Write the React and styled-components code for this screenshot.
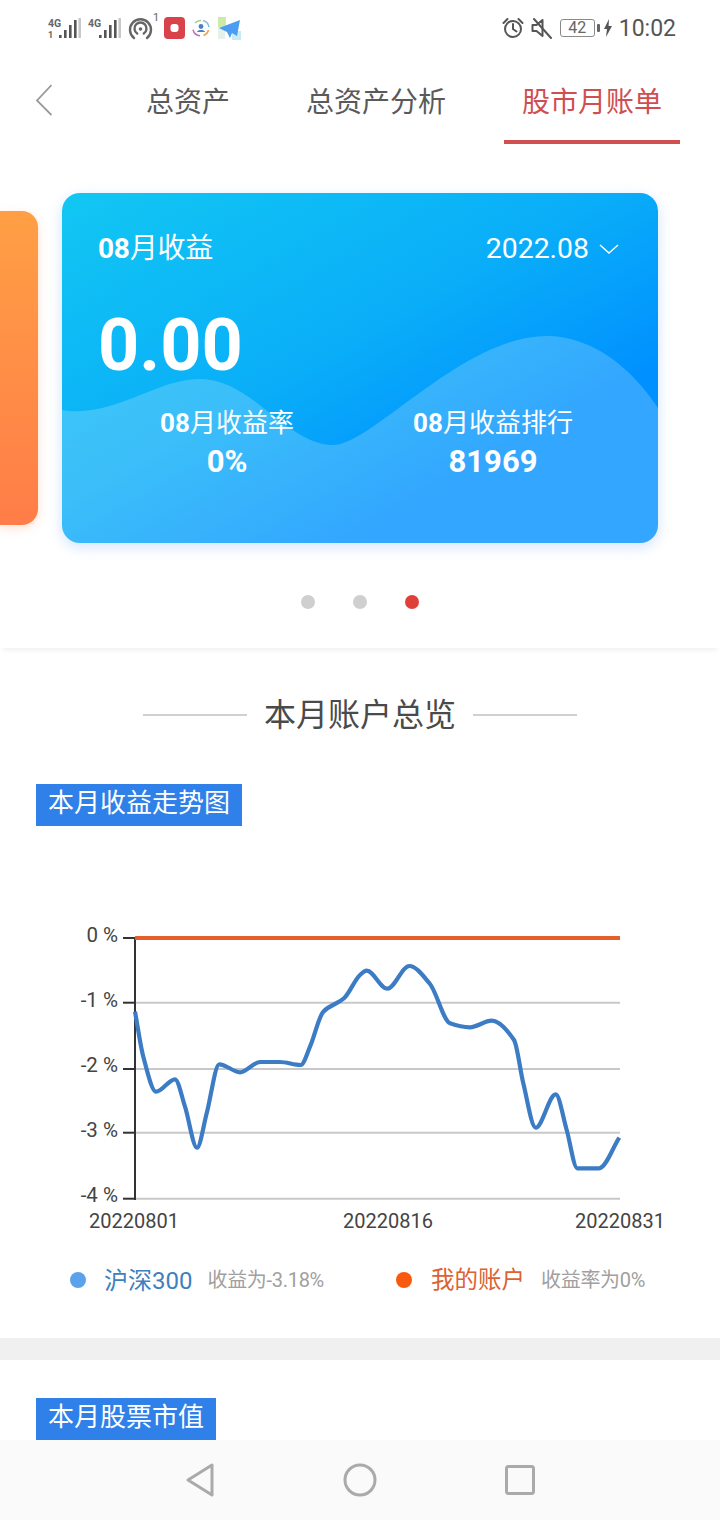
import React from "react";
import styled, { createGlobalStyle } from "styled-components";

const FONT = `Roboto, "Noto Sans CJK SC", sans-serif`;

const Global = createGlobalStyle`
  html, body { margin: 0; padding: 0; background: #fff; }
  * { box-sizing: border-box; }
  body { font-family: ${FONT}; }
`;

const Page = styled.div`
  width: 720px;
  height: 1520px;
  overflow: hidden;
  background: #fff;
  display: flex;
  flex-direction: column;
`;

const StatusBar = styled.div`
  height: 56px;
  padding: 0 44px 0 48px;
  display: flex;
  align-items: center;
  justify-content: space-between;
`;
const StatusGroup = styled.div`
  display: flex;
  align-items: center;
  gap: ${(p) => p.$gap || 7}px;
`;
const Clock = styled.span`
  font-size: 23px;
  color: #555;
  line-height: 1;
`;
const Battery = styled.div`
  width: 35px;
  height: 18px;
  border: 1.5px solid #8a8a8a;
  border-radius: 3px;
  font-size: 16px;
  line-height: 15px;
  text-align: center;
  color: #666;
`;
const BatteryTip = styled.div`
  width: 3px;
  height: 8px;
  background: #666;
  border-radius: 1px;
  margin: 0 -3px 0 -5px;
`;

const Nav = styled.nav`
  height: 88px;
  display: flex;
  align-items: stretch;
  padding-left: 36px;
`;
const BackButton = styled.div`
  width: 16px;
  display: flex;
  align-items: center;
  margin-right: 76px;
`;
const Tabs = styled.div`
  display: flex;
  gap: 40px;
`;
const Tab = styled.div`
  padding: 4px 18px 0;
  height: 88px;
  display: flex;
  align-items: center;
  font-size: 28px;
  color: ${(p) => (p.$active ? "#cf4f50" : "#5a5a5a")};
  border-bottom: 4px solid ${(p) => (p.$active ? "#d05050" : "transparent")};
`;

const Carousel = styled.section`
  height: 504px;
  padding-top: 49px;
  background: #fff;
  box-shadow: 0 5px 5px -3px rgba(0, 0, 0, 0.07);
  position: relative;
  z-index: 1;
  display: flex;
  flex-direction: column;
`;
const Slides = styled.div`
  display: flex;
  align-items: center;
  gap: 24px;
`;
const PeekCard = styled.div`
  width: 38px;
  height: 314px;
  border-radius: 0 16px 16px 0;
  background: linear-gradient(180deg, #ff9f45 0%, #ff7d48 100%);
  box-shadow: 0 3px 10px rgba(255, 130, 60, 0.25);
`;
const Card = styled.div`
  position: relative;
  width: 596px;
  height: 350px;
  border-radius: 18px;
  overflow: hidden;
  color: #fff;
  background: linear-gradient(150deg, #12c7f3 0%, #0aaef8 45%, #0090ff 75%);
`;
const CardShell = styled.div`
  border-radius: 18px;
  box-shadow: 0 4px 14px rgba(50, 130, 240, 0.22);
`;
const Wave = styled.svg`
  position: absolute;
  left: 0;
  top: 0;
`;
const CardBody = styled.div`
  position: relative;
  height: 100%;
  display: flex;
  flex-direction: column;
`;
const CardHeader = styled.div`
  display: flex;
  align-items: center;
  justify-content: space-between;
  height: 40px;
  margin-top: 36px;
  padding: 0 39px 0 36px;
`;
const MonthTitle = styled.div`
  font-size: 28px;
  line-height: 40px;
  letter-spacing: -0.2px;
`;
const Strong = styled.b`
  font-weight: 700;
`;
const DatePicker = styled.div`
  display: flex;
  align-items: center;
  gap: 10px;
  font-size: 28.4px;
  line-height: 40px;
`;
const BigValue = styled.div`
  font-size: 72px;
  font-weight: 700;
  line-height: 84px;
  margin-top: 35px;
  padding-left: 36px;
`;
const Stats = styled.div`
  display: grid;
  grid-template-columns: 266px 266px;
  padding: 0 32px;
  margin-top: 16px;
`;
const Stat = styled.div`
  display: flex;
  flex-direction: column;
  align-items: center;
`;
const StatLabel = styled.div`
  font-size: 26px;
  line-height: 38px;
`;
const StatValue = styled.div`
  font-size: 31px;
  font-weight: 700;
  line-height: 40px;
`;
const Dots = styled.div`
  display: flex;
  justify-content: center;
  gap: 38px;
  margin-top: 52px;
`;
const Dot = styled.span`
  width: 14px;
  height: 14px;
  border-radius: 50%;
  background: ${(p) => (p.$active ? "#e0403a" : "#cfcfcf")};
`;

const Overview = styled.section`
  height: 690px;
  display: flex;
  flex-direction: column;
`;
const Heading = styled.div`
  display: flex;
  align-items: center;
  justify-content: center;
  gap: 17px;
  height: 40px;
  margin-top: 47px;
  font-size: 32px;
  color: #4a4a4a;
`;
const HeadingTitle = styled.span`
  line-height: 40px;
`;
const HeadingRule = styled.span`
  width: 104px;
  height: 2px;
  background: #d0d0d0;
`;
const Tag = styled.div`
  align-self: flex-start;
  height: 42px;
  margin: ${(p) => p.$top}px 0 0 36px;
  padding: 0 12px;
  background: #2f80e8;
  color: #fff;
  font-size: 26px;
  line-height: 38px;
`;
const Chart = styled.svg`
  display: block;
  margin-top: 84px;
  flex: none;
`;
const Legend = styled.div`
  height: 80px;
  display: flex;
  align-items: center;
  padding-left: 70px;
`;
const LegendItem = styled.div`
  display: flex;
  align-items: center;
  width: ${(p) => p.$width}px;
`;
const LegendDot = styled.span`
  width: 16px;
  height: 16px;
  border-radius: 50%;
  background: ${(p) => p.$color};
  margin-right: ${(p) => p.$gap}px;
`;
const LegendName = styled.span`
  font-size: ${(p) => p.$size}px;
  color: ${(p) => p.$color};
  margin: 0 ${(p) => p.$gap}px 4px 0;
`;
const LegendNote = styled.span`
  font-size: 20px;
  color: #a0a0a0;
  letter-spacing: -0.3px;
  margin-bottom: 3px;
`;
const Band = styled.div`
  height: 22px;
  background: #f0f0f0;
  flex: none;
`;
const Holdings = styled.section`
  height: 80px;
  display: flex;
  flex-direction: column;
`;
const SystemBar = styled.div`
  height: 80px;
  background: #fafafa;
  flex: none;
  display: flex;
  align-items: center;
  justify-content: center;
  gap: 128px;
`;
const HotspotSvg = styled.svg`
  overflow: visible;
`;

const SignalIcon = ({ extra }) => (
  <svg width="33" height="22" viewBox="0 0 33 22">
    <text x="0" y="10" fontFamily="Roboto, sans-serif" fontSize="10.5" fontWeight="700" fill="#666">4G</text>
    {extra && <text x="0" y="21" fontFamily="Roboto, sans-serif" fontSize="9" fontWeight="700" fill="#666">1</text>}
    <rect x="11" y="18" width="2.6" height="3" fill="#555" />
    <rect x="16" y="13" width="2.6" height="8" fill="#555" />
    <rect x="21" y="8" width="2.6" height="13" fill="#555" />
    <rect x="26" y="3" width="2.6" height="18" fill="#555" />
    <rect x="30.4" y="1" width="2.6" height="20" fill="#c8c8c8" />
  </svg>
);

const HotspotIcon = () => (
  <HotspotSvg width="29" height="28" viewBox="0 0 29 28">
    <g fill="none" stroke="#666" strokeWidth="2.4" strokeLinecap="round">
      <path d="M6 24a10.5 10.5 0 1 1 13 0" />
      <path d="M9.2 19.5a6 6 0 1 1 6.6 0" />
    </g>
    <circle cx="12.5" cy="15" r="1.8" fill="#666" />
    <text x="25" y="7" fontFamily="Roboto, sans-serif" fontSize="11" fill="#666">1</text>
  </HotspotSvg>
);

const RecordIcon = () => (
  <svg width="21" height="22" viewBox="0 0 21 22">
    <rect width="21" height="22" rx="4" fill="#d8434b" />
    <rect x="6.5" y="7" width="8" height="8" rx="3" fill="#fff" />
  </svg>
);

const RingIcon = () => (
  <svg width="18" height="18" viewBox="0 0 18 18">
    <g fill="none" strokeWidth="1.5">
      <path d="M3 4a8 8 0 0 1 6-2.6" stroke="#9ccf8e" />
      <path d="M11 1.5a8 8 0 0 1 6 6.5" stroke="#7fc2d8" />
      <path d="M16.5 11a8 8 0 0 1-5 5.5" stroke="#e6a04a" />
      <path d="M8 16.8a8 8 0 0 1-7-6" stroke="#c56bc4" />
    </g>
    <circle cx="9" cy="7.5" r="2.4" fill="#4c7fc4" />
    <path d="M5 13c.6-2.6 7.4-2.6 8 0Z" fill="#4c7fc4" />
  </svg>
);

const PlaneIcon = () => (
  <svg width="23" height="23" viewBox="0 0 23 23">
    <rect x="0" y="0" width="8" height="10" fill="#cdeaa8" />
    <rect x="0" y="10" width="7" height="12" fill="#e6f1ea" />
    <rect x="14" y="14" width="9" height="9" fill="#c8ecf4" />
    <path d="M22 3 1 11l6 3 2 1 3 6 2-5 5 3Z" fill="#4a9df0" />
  </svg>
);

const AlarmIcon = () => (
  <svg width="22" height="22" viewBox="0 0 22 22" fill="none" stroke="#555" strokeWidth="2">
    <circle cx="11" cy="12" r="8" />
    <path d="M11 7v5l3.5 2.5M1.5 6 5.5 2M20.5 6l-4-4" strokeLinecap="round" />
  </svg>
);

const MuteIcon = () => (
  <svg width="22" height="22" viewBox="0 0 22 22" fill="none" stroke="#555" strokeWidth="2">
    <path d="M1.5 8h4l6-5v16l-6-5h-4Z" strokeLinejoin="round" />
    <path d="M3 2l17 19" strokeLinecap="round" />
  </svg>
);

const BoltIcon = () => (
  <svg width="8" height="18" viewBox="0 0 8 18">
    <path d="M5 0 0 10h3l-1 8 6-11H4.600Z" fill="#555" />
  </svg>
);

const points = [
  [135, 1011.7], [143.3, 1056.7], [156, 1091.7], [175, 1079.3], [185, 1106.7], [197, 1147.7],
  [206.7, 1113.3], [219.3, 1064.3], [240, 1072.3], [260, 1062], [280, 1062], [300.7, 1065],
  [310, 1046.7], [323.3, 1011.7], [344, 998.3], [360, 975], [366.7, 970.7], [387.3, 988.7],
  [409.3, 966], [430, 984], [450, 1023.3], [470, 1027.3], [491.700, 1020.7], [514, 1040],
  [523.3, 1083.3], [535.7, 1127.7], [555.7, 1094.3], [566.7, 1130], [577.3, 1168.3],
  [599, 1168.3], [619.3, 1137.7],
].map(([x, y]) => [x, y - 910]);

function monotonePath(pts) {
  const n = pts.length;
  const secant = [];
  for (let i = 0; i < n - 1; i++) {
    secant.push((pts[i + 1][1] - pts[i][1]) / (pts[i + 1][0] - pts[i][0]));
  }
  const slope = pts.map((_, i) => {
    if (i === 0) return secant[0];
    if (i === n - 1) return secant[n - 2];
    const a = secant[i - 1];
    const b = secant[i];
    return a * b <= 0 ? 0 : (2 * a * b) / (a + b);
  });
  let d = `M${pts[0][0]} ${pts[0][1]}`;
  for (let i = 0; i < n - 1; i++) {
    const h = (pts[i + 1][0] - pts[i][0]) / 3;
    const c1x = pts[i][0] + h;
    const c1y = pts[i][1] + slope[i] * h;
    const c2x = pts[i + 1][0] - h;
    const c2y = pts[i + 1][1] - slope[i + 1] * h;
    d += ` C${c1x.toFixed(1)} ${c1y.toFixed(1)} ${c2x.toFixed(1)} ${c2y.toFixed(1)} ${pts[i + 1][0]} ${pts[i + 1][1]}`;
  }
  return d;
}

const yTicks = [
  { label: "0 %", y: 28, text: 32 },
  { label: "-1 %", y: 92.7, text: 97 },
  { label: "-2 %", y: 159, text: 162 },
  { label: "-3 %", y: 222.7, text: 227 },
  { label: "-4 %", y: 288.7, text: 292 },
];

const TrendChart = () => (
  <Chart width="720" height="330" viewBox="0 0 720 330">
    {yTicks.slice(1).map((t) => (
      <line key={t.label} x1="135" x2="620" y1={t.y} y2={t.y} stroke="#c8c8c8" strokeWidth="2" />
    ))}
    {yTicks.map((t) => (
      <g key={t.label}>
        <line x1="123" x2="135" y1={t.y} y2={t.y} stroke="#333" strokeWidth="2" />
        <text x="118" y={t.text} textAnchor="end" fontFamily="Roboto, sans-serif" fontSize="20.5" fill="#444">{t.label}</text>
      </g>
    ))}
    <line x1="135" x2="135" y1="28" y2="290" stroke="#333" strokeWidth="2" />
    <path d={monotonePath(points)} fill="none" stroke="#3b7cc4" strokeWidth="4.2" strokeLinejoin="round" />
    <line x1="135" x2="620" y1="28" y2="28" stroke="#e55f2a" strokeWidth="4" />
    <g fontFamily="Roboto, sans-serif" fontSize="20" fill="#444">
      <text x="89" y="318">20220801</text>
      <text x="343" y="318">20220816</text>
      <text x="575" y="318">20220831</text>
    </g>
  </Chart>
);

export default function App() {
  return (
    <Page>
      <Global />
      <StatusBar>
        <StatusGroup $gap={7}>
          <SignalIcon extra />
          <SignalIcon />
          <HotspotIcon />
          <RecordIcon />
          <StatusGroup $gap={8}>
            <RingIcon />
            <PlaneIcon />
          </StatusGroup>
        </StatusGroup>
        <StatusGroup $gap={7}>
          <AlarmIcon />
          <MuteIcon />
          <Battery>42</Battery>
          <BatteryTip />
          <BoltIcon />
          <Clock>10:02</Clock>
        </StatusGroup>
      </StatusBar>

      <Nav>
        <BackButton>
          <svg width="16" height="32" viewBox="0 0 16 32" fill="none" stroke="#999" strokeWidth="1.8">
            <path d="M15.500 1 1 16.500 15.500 31" />
          </svg>
        </BackButton>
        <Tabs>
          <Tab>总资产</Tab>
          <Tab>总资产分析</Tab>
          <Tab $active>股市月账单</Tab>
        </Tabs>
      </Nav>

      <Carousel>
        <Slides>
          <PeekCard />
          <CardShell>
            <Card>
              <Wave width="596" height="350" viewBox="0 0 596 350">
                <path
                  d="M0 217C10 219 22 219 40 215C75 207 105 186 138 186C190 186 225 252 271 252C310 252 400 143 485 143C530 143 570 175 596 215V350H0Z"
                  fill="rgba(255,255,255,0.2)"
                />
              </Wave>
              <CardBody>
                <CardHeader>
                  <MonthTitle><Strong>08</Strong>月收益</MonthTitle>
                  <DatePicker>
                    2022.08
                    <svg width="20" height="10" viewBox="0 0 20 10" fill="none" stroke="#fff" strokeWidth="1.500">
                      <path d="M1 1l9 8 9-8" />
                    </svg>
                  </DatePicker>
                </CardHeader>
                <BigValue>0.00</BigValue>
                <Stats>
                  <Stat>
                    <StatLabel><Strong>08</Strong>月收益率</StatLabel>
                    <StatValue>0%</StatValue>
                  </Stat>
                  <Stat>
                    <StatLabel><Strong>08</Strong>月收益排行</StatLabel>
                    <StatValue>81969</StatValue>
                  </Stat>
                </Stats>
              </CardBody>
            </Card>
          </CardShell>
        </Slides>
        <Dots>
          <Dot />
          <Dot />
          <Dot $active />
        </Dots>
      </Carousel>

      <Overview>
        <Heading>
          <HeadingRule />
          <HeadingTitle>本月账户总览</HeadingTitle>
          <HeadingRule />
        </Heading>
        <Tag $top={49}>本月收益走势图</Tag>
        <TrendChart />
        <Legend>
          <LegendItem $width={326}>
            <LegendDot $color="#5ba2ec" $gap={18} />
            <LegendName $size={24} $color="#3e80c0" $gap={15}>沪深300</LegendName>
            <LegendNote>收益为-3.18%</LegendNote>
          </LegendItem>
          <LegendItem>
            <LegendDot $color="#f9590f" $gap={19} />
            <LegendName $size={23.5} $color="#dc6232" $gap={16}>我的账户</LegendName>
            <LegendNote>收益率为0%</LegendNote>
          </LegendItem>
        </Legend>
      </Overview>
      <Band />
      <Holdings>
        <Tag $top={38}>本月股票市值</Tag>
      </Holdings>
      <SystemBar>
        <svg width="30" height="34" viewBox="0 0 30 34" fill="none" stroke="#aaa" strokeWidth="3" strokeLinejoin="round">
          <path d="M27 2v30L3 17Z" />
        </svg>
        <svg width="34" height="34" viewBox="0 0 34 34" fill="none" stroke="#aaa" strokeWidth="3">
          <circle cx="17" cy="17" r="15" />
        </svg>
        <svg width="30" height="30" viewBox="0 0 30 30" fill="none" stroke="#aaa" strokeWidth="3">
          <rect x="1.500" y="1.500" width="27" height="27" rx="2" />
        </svg>
      </SystemBar>
    </Page>
  );
}
